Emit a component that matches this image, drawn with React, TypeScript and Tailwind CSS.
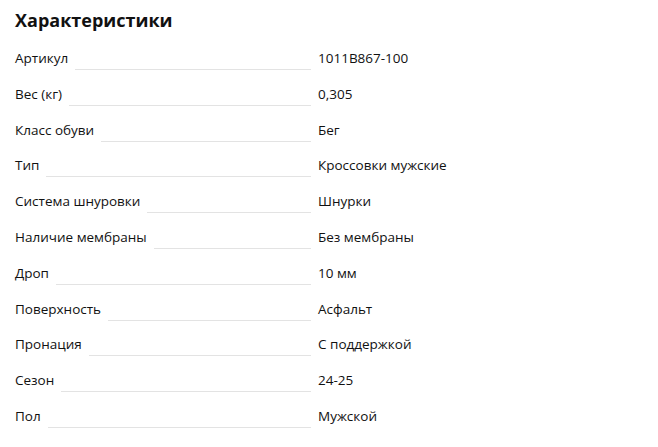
const specs: [string, string][] = [
	["Артикул", "1011B867-100"],
	["Вес (кг)", "0,305"],
	["Класс обуви", "Бег"],
	["Тип", "Кроссовки мужские"],
	["Система шнуровки", "Шнурки"],
	["Наличие мембраны", "Без мембраны"],
	["Дроп", "10 мм"],
	["Поверхность", "Асфальт"],
	["Пронация", "С поддержкой"],
	["Сезон", "24-25"],
	["Пол", "Мужской"],
];

function SpecRow({ label, value }: { label: string; value: string }) {
	return (
		<div className="flex h-[35.8px] items-start">
			<div className="flex w-[296px] shrink-0 items-start">
				<span className="pt-[8px] text-[13.5px] leading-5 whitespace-nowrap text-[#111]">{label}</span>
				<div className="ml-[7px] mt-[29px] h-px flex-1 bg-[#e3e3e3]" />
			</div>
			<span className="ml-[7px] pt-[8px] text-[13.5px] leading-5 text-[#111]">{value}</span>
		</div>
	);
}

export default function App() {
	return (
		<div className="min-h-[447px] w-[658px] bg-white px-[15px] font-['Open_Sans',sans-serif]">
			<h2 className="flex h-10 items-center text-[18px] font-bold text-[#111]">Характеристики</h2>
			<div>
				{specs.map(([label, value]) => (
					<SpecRow key={label} label={label} value={value} />
				))}
			</div>
		</div>
	);
}
